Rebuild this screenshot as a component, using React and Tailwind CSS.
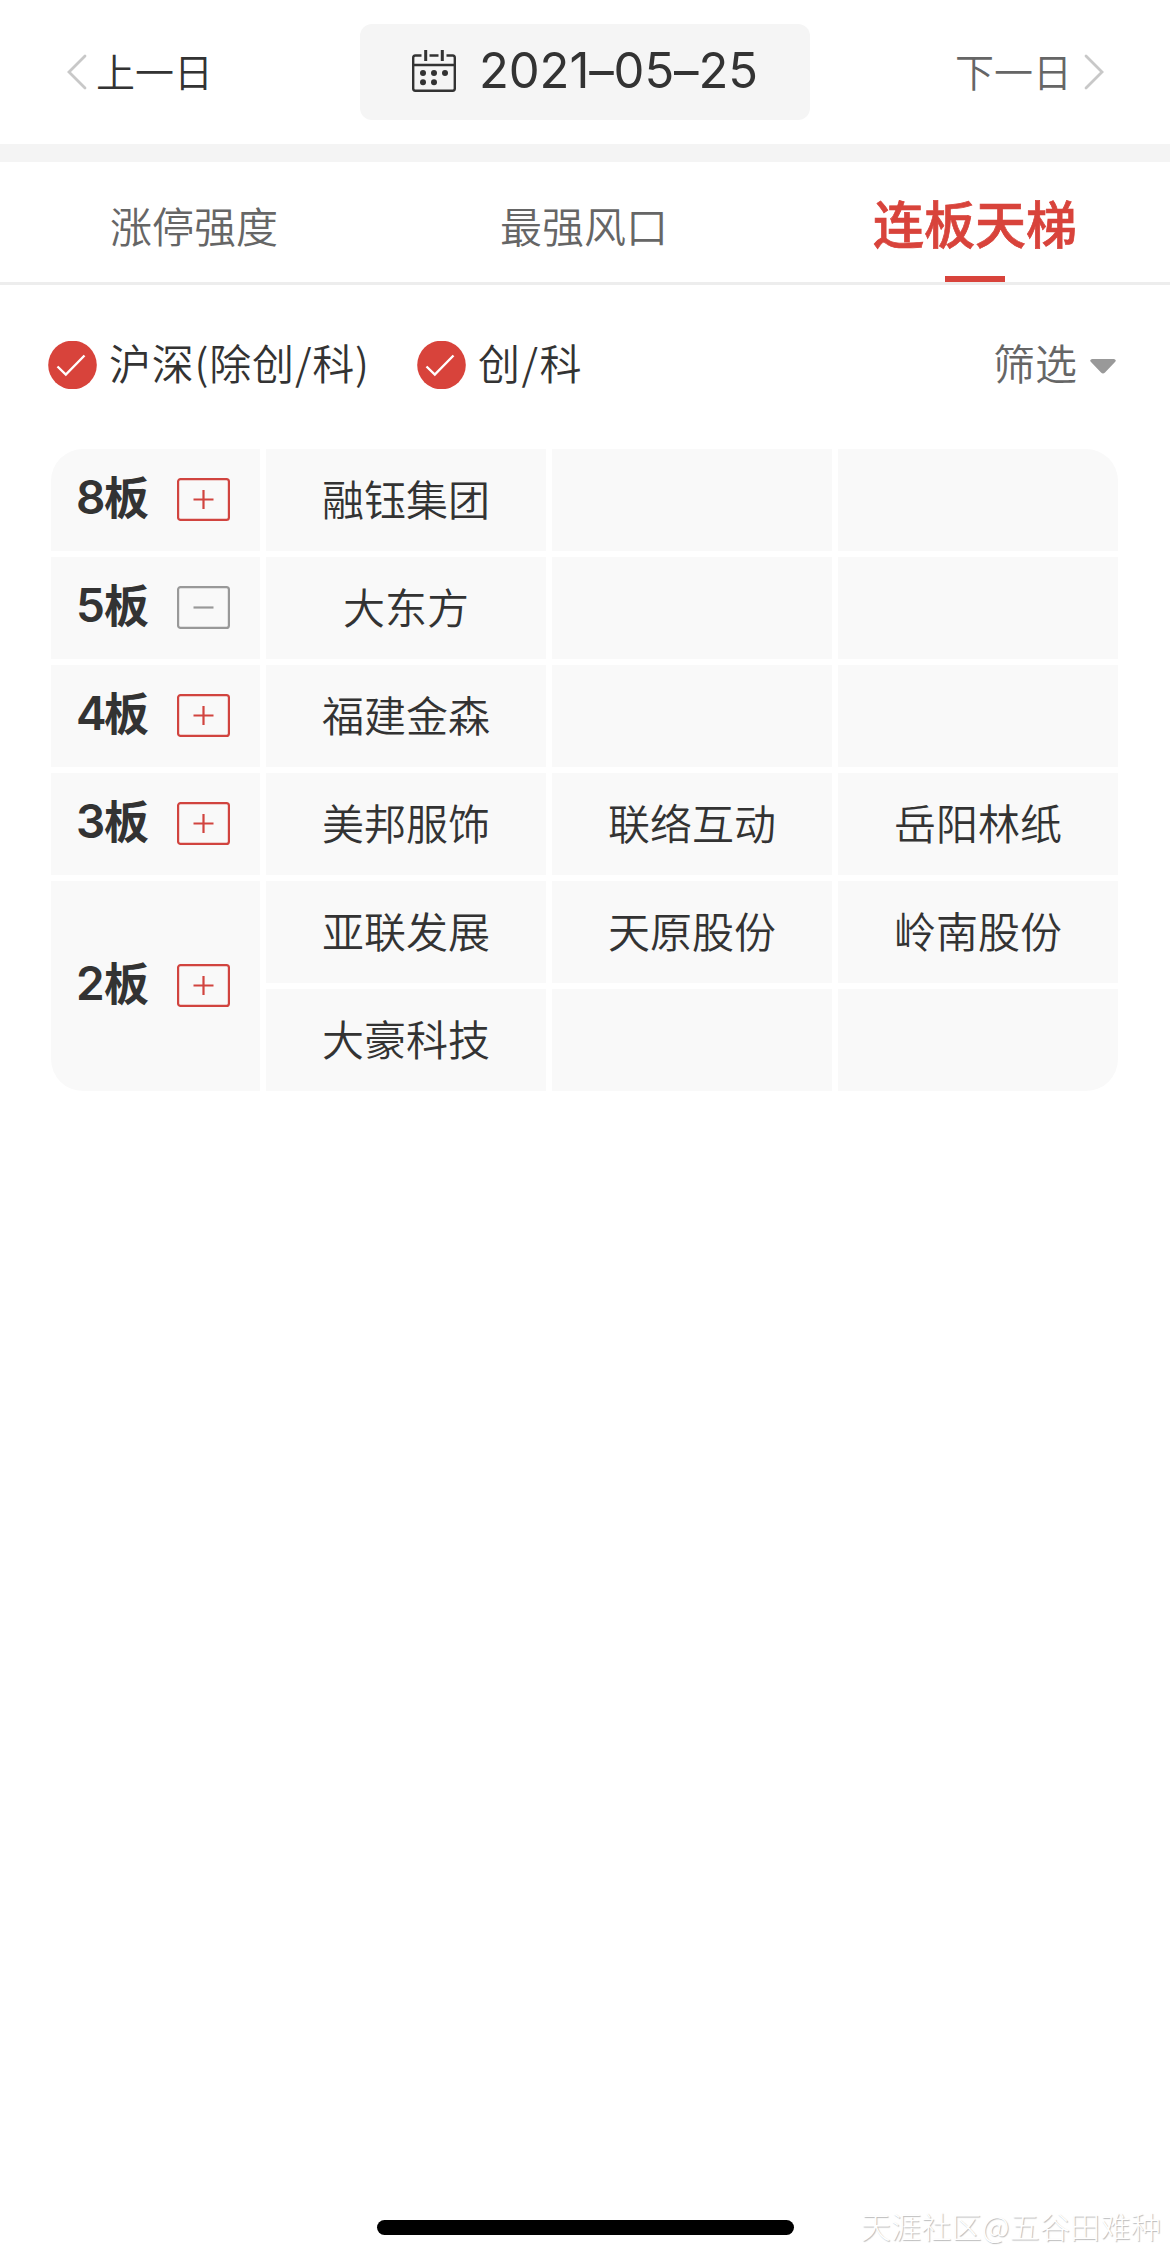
import { useState } from 'react'

const TABS = ['涨停强度', '最强风口', '连板天梯']

const LEVELS = [
    { level: 8, open: true, rows: [['融钰集团', '', '']] },
    { level: 5, open: false, rows: [['大东方', '', '']] },
    { level: 4, open: true, rows: [['福建金森', '', '']] },
    { level: 3, open: true, rows: [['美邦服饰', '联络互动', '岳阳林纸']] },
    { level: 2, open: true, rows: [['亚联发展', '天原股份', '岭南股份'], ['大豪科技', '', '']] },
]

function Chevron({ flip }) {
    return (
        <svg width="20" height="36" viewBox="0 0 20 36" fill="none" stroke="#c8c8c8" strokeWidth="2.8" strokeLinecap="round" className={flip ? 'rotate-180' : ''}>
            <path d="M18 2 L2 18 L18 34" />
        </svg>
    )
}

function CalendarIcon() {
    return (
        <svg width="44" height="42" viewBox="0 0 44 42" fill="none" stroke="#333" strokeWidth="2.4" className="mb-0.5">
            <path d="M9.5 5.5H3.3Q1.2 5.5 1.2 7.7V38.6Q1.2 40.8 3.3 40.8H40.7Q42.8 40.8 42.8 38.6V7.7Q42.8 5.5 40.7 5.5H34.5M17.5 5.5H26.5M1 15H43" />
            <path d="M13.7 0V11M30.3 0V11" strokeWidth="3" />
            <g fill="#333" stroke="none">
                <circle cx="11" cy="23" r="3" />
                <circle cx="22" cy="23" r="3" />
                <circle cx="33" cy="23" r="3" />
                <circle cx="11" cy="32.3" r="3" />
                <circle cx="22" cy="32.3" r="3" />
            </g>
        </svg>
    )
}

function Check({ label, className }) {
    return (
        <label className={`flex items-center ${className}`}>
            <svg width="49" height="48" viewBox="0 0 49 48" fill="none">
                <circle cx="24.5" cy="24" r="24.3" fill="#d8433b" />
                <path d="M9.5 25.5L17.8 33.5L36.5 14.5" stroke="#fff" strokeWidth="2.4" />
            </svg>
            <span className="ml-3 pb-1.5">{label}</span>
        </label>
    )
}

function ToggleIcon({ open }) {
    return (
        <svg width="53" height="43" viewBox="0 0 53 43" fill="none" stroke={open ? '#d1443f' : '#999'} strokeWidth="2.2">
            <rect x="1.1" y="1.1" width="50.8" height="40.8" rx="2.5" />
            <path d={open ? 'M16.5 21.5H36.5M26.5 12V31' : 'M16.5 21.5H36.5'} />
        </svg>
    )
}

function App() {
    const [tab, setTab] = useState(2)

    return (
        <div className="relative flex flex-col w-[1170px] h-[2259px] bg-white text-[#333] text-[42px] leading-none font-[350] font-['Noto_Sans_CJK_SC',sans-serif]">
            <header className="flex items-center h-36 pl-[67px]">
                <button className="flex items-center w-[293px] text-[39px]">
                    <Chevron />
                    <span className="ml-[9px] pb-1">上一日</span>
                </button>
                <button className="flex items-center w-[450px] h-24 pl-[52px] rounded-xl bg-[#f5f5f5]">
                    <CalendarIcon />
                    <span className="ml-[23px] pb-1 text-[49px] tracking-[-0.1px] font-normal font-['Inter',sans-serif]">2021–05–25</span>
                </button>
                <button className="flex items-center justify-end w-[294px] text-[39px] text-[#666]">
                    <span className="mr-3 pb-1">下一日</span>
                    <Chevron flip />
                </button>
            </header>
            <div className="h-[18px] bg-[#f4f4f4]" />
            <nav className="grid grid-cols-3 h-[123px] border-b-3 border-[#ededed]">
                {TABS.map((t, i) => (
                    <button key={t} onClick={() => setTab(i)}
                        className={`relative flex items-center justify-center ${tab === i ? 'text-[51px] font-medium text-[#d8433b] [-webkit-text-stroke:0.7px_#d8433b]' : 'pt-1.5 pr-0.5 text-[#666]'}`}>
                        {t}
                        {tab === i && <span className="absolute bottom-0 left-[165px] w-[60px] h-1.5 bg-[#d8433b]" />}
                    </button>
                ))}
            </nav>
            <div className="flex items-center h-[164px] pb-1 pl-12 pr-[54px]">
                <Check label="沪深(除创/科)" className="w-[369px] tracking-[0.8px]" />
                <Check label="创/科" className="tracking-[1.5px]" />
                <button className="flex items-center ml-auto text-[#666]">
                    <span className="pb-1.5">筛选</span>
                    <svg width="26" height="15" viewBox="0 0 26 15" fill="#999" className="ml-[13px] mt-0.5">
                        <path d="M2 0H24Q27 1 25 3L15 13.5Q13 15.5 11 13.5L1 3Q-1 1 2 0Z" />
                    </svg>
                </button>
            </div>
            <div className="flex flex-col gap-1.5 ml-[51px] w-[1067px] rounded-[32px] overflow-hidden">
                {LEVELS.map(l => (
                    <div key={l.level} className="flex gap-1.5">
                        <div className="flex items-center w-[209px] pl-[25px] pb-0.5 bg-[#f9f9f9]">
                            <span className="flex items-center w-[101px] pb-2 text-[45px] font-bold">
                                <span className="w-[28px] pt-1 text-[46px] font-semibold font-['Inter',sans-serif]">{l.level}</span>
                                板
                            </span>
                            <ToggleIcon open={l.open} />
                        </div>
                        <div className="grid grid-cols-[280px_280px_280px] auto-rows-[102px] gap-1.5">
                            {l.rows.flat().map((name, i) => (
                                <div key={i} className="flex items-center justify-center pb-1 bg-[#f9f9f9]">{name}</div>
                            ))}
                        </div>
                    </div>
                ))}
            </div>
            <div className="mt-auto mb-6 mx-auto w-[417px] h-[15px] rounded-full bg-black" />
            <div className="absolute right-[9px] bottom-[19px] text-[30px] tracking-[0.3px] font-light text-white [text-shadow:1px_1px_1px_#bbb]">天涯社区@五谷田难种</div>
        </div>
    )
}

export default App
